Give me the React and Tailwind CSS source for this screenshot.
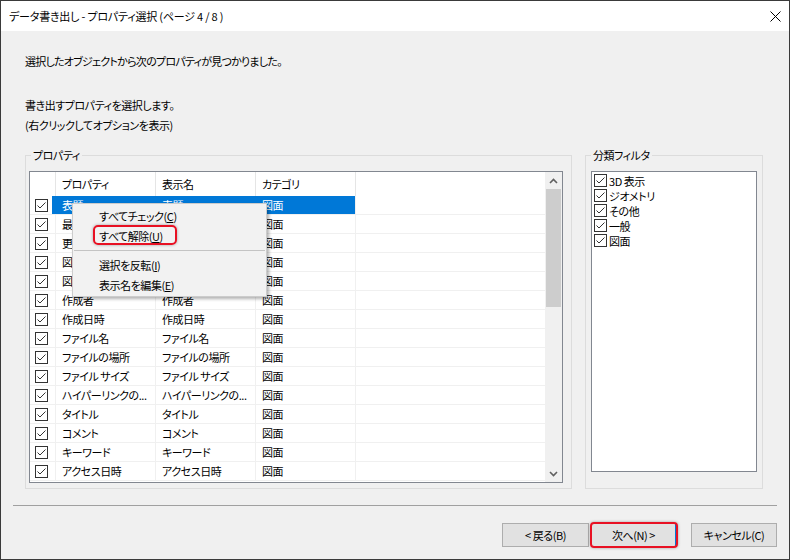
import React from 'react';

const ROWS = [
  ['表題', '表題'],
  ['最終保存者', '最終保存者'],
  ['更新日時', '更新日時'],
  ['図面番号', '図面番号'],
  ['図面名', '図面名'],
  ['作成者', '作成者'],
  ['作成日時', '作成日時'],
  ['ファイル名', 'ファイル名'],
  ['ファイルの場所', 'ファイルの場所'],
  ['ファイル サイズ', 'ファイル サイズ'],
  ['ハイパーリンクの...', 'ハイパーリンクの...'],
  ['タイトル', 'タイトル'],
  ['コメント', 'コメント'],
  ['キーワード', 'キーワード'],
  ['アクセス日時', 'アクセス日時'],
];

const FILTERS = ['3D 表示', 'ジオメトリ', 'その他', '一般', '図面'];

const CheckBox = () => (
  <svg width="13" height="13" viewBox="0 0 13 13" className="shrink-0">
    <rect x="0.5" y="0.5" width="12" height="12" fill="#fff" stroke="#333" />
    <path d="M2.5 6.5 L5 9 L10.5 3.5" fill="none" stroke="#333" strokeWidth="1" />
  </svg>
);

const Chevron = ({ down }) => (
  <svg width="9" height="6" viewBox="0 0 9 6">
    <path
      d={down ? 'M1 1 L4.5 4.5 L8 1' : 'M1 5 L4.5 1.5 L8 5'}
      fill="none"
      stroke="#606060"
      strokeWidth="1.6"
    />
  </svg>
);

const ContextMenu = () => (
  <div className="absolute left-[42px] top-[31px] w-[195px] border border-[#cccccc] bg-[#f2f2f2] pt-[2px] pb-[1px] shadow-[2px_2px_3px_rgba(0,0,0,0.3)] z-10">
    <div className="h-[20px] flex items-center pl-[26px]">
      すべてチェック(<u>C</u>)
    </div>
    <div className="h-[20px] flex items-center pl-[26px] relative">
      <div className="absolute left-[20px] top-[-1px] w-[84px] h-[20px] border-2 border-[#e81123] rounded-[5px] shadow-[0_0_3px_rgba(0,0,0,0.35)]" />
      すべて解除(<u>U</u>)
    </div>
    <div className="h-[9px] flex items-center px-[1px]">
      <div className="h-px w-full bg-[#c4c4c4]" />
    </div>
    <div className="h-[20px] flex items-center pl-[26px]">
      選択を反転(<u>I</u>)
    </div>
    <div className="h-[20px] flex items-center pl-[26px]">
      表示名を編集(<u>E</u>)
    </div>
  </div>
);

const PropertyList = () => (
  <div className="relative mt-[8px] w-[534px] h-[312px] border border-[#828790] bg-white flex">
    <div className="w-[515px] flex flex-col">
      <div className="h-[24px] flex shrink-0">
        <div className="w-[22px]" />
        <div className="w-[4px] border-r border-[#e5e5e5]" />
        <div className="w-[100px] border-r border-[#e5e5e5] pl-[6px] flex items-center">プロパティ</div>
        <div className="w-[100px] border-r border-[#e5e5e5] pl-[6px] flex items-center">表示名</div>
        <div className="w-[100px] border-r border-[#e5e5e5] pl-[6px] flex items-center">カテゴリ</div>
      </div>
      {ROWS.map(([name, label], i) => {
        const sel = i === 0;
        return (
          <div key={name} className="h-[19px] flex shrink-0 border-b border-[#f0f0f0]">
            <div className="w-[22px] flex items-center justify-end pr-[4px]">
              <CheckBox />
            </div>
            <div className={`flex ${sel ? 'bg-[#0078d7] text-white' : ''}`}>
              <div className={`w-[4px] border-r ${sel ? 'border-[#0078d7]' : 'border-[#f0f0f0]'}`} />
              <div className={`w-[100px] border-r ${sel ? 'border-[#0078d7]' : 'border-[#f0f0f0]'} pl-[6px] flex items-center whitespace-nowrap overflow-hidden`}>{name}</div>
              <div className={`w-[100px] border-r ${sel ? 'border-[#0078d7]' : 'border-[#f0f0f0]'} pl-[6px] flex items-center whitespace-nowrap overflow-hidden`}>{label}</div>
              <div className="w-[100px] border-r border-[#f0f0f0] pl-[6px] flex items-center">図面</div>
            </div>
          </div>
        );
      })}
    </div>
    <div className="w-[17px] bg-[#f0f0f0] flex flex-col">
      <div className="h-[17px] flex items-center justify-center">
        <Chevron />
      </div>
      <div className="mx-[1px] h-[118px] bg-[#cdcdcd]" />
      <div className="flex-1" />
      <div className="h-[17px] flex items-center justify-center">
        <Chevron down />
      </div>
    </div>
    <ContextMenu />
  </div>
);

export default function App() {
  return (
    <div className="w-[790px] h-[560px] border border-[#3a3a3a] bg-[#f0f0f0] flex flex-col text-[11px] leading-[16px] tracking-[-0.45px] text-black [font-family:'Noto_Sans_CJK_JP',sans-serif] [font-feature-settings:'palt']">
      <div className="h-[30px] bg-white flex items-center justify-between pl-[8px] pr-[8px] shrink-0">
        <span className="tracking-[-0.2px]">データ書き出し - プロパティ選択 (ページ 4 / 8 )</span>
        <svg width="11" height="11" viewBox="0 0 11 11">
          <path d="M0.5 0.5 L10.5 10.5 M10.5 0.5 L0.5 10.5" stroke="#000" strokeWidth="1" />
        </svg>
      </div>

      <div className="flex-1 flex flex-col">
        <div className="pl-[24px] pt-[20px]">
          <p className="leading-[20px] tracking-[-0.75px]">選択したオブジェクトから次のプロパティが見つかりました。</p>
          <p className="leading-[20px] mt-[24px]">書き出すプロパティを選択します。</p>
          <p className="leading-[20px]">(右クリックしてオプションを表示)</p>

          <div className="flex gap-[13px] mt-[12px]">
            <fieldset className="w-[547px] border border-[#dcdcdc] px-[3px] pb-[5px] m-0 min-w-0">
              <legend className="ml-[2px] px-[2px] leading-[16px]">プロパティ</legend>
              <PropertyList />
            </fieldset>

            <fieldset className="w-[178px] border border-[#dcdcdc] px-[5px] pb-[16px] m-0 min-w-0">
              <legend className="px-[2px] leading-[16px]">分類フィルタ</legend>
              <div className="mt-[8px] w-[166px] h-[301px] border border-[#828790] bg-white pt-[1px] pl-[2px]">
                {FILTERS.map((f) => (
                  <div key={f} className="h-[15px] flex items-center gap-[2px]">
                    <CheckBox />
                    <span>{f}</span>
                  </div>
                ))}
              </div>
            </fieldset>
          </div>
        </div>

        <div className="mx-[12px] mt-[16px] h-px bg-[#a0a0a0]" />

        <div className="mt-[17px] flex justify-end pr-[12px]">
          <button className="w-[87px] h-[24px] mr-[2px] border border-[#adadad] bg-[#e1e1e1] flex items-center justify-center">
            &lt; 戻る(B)
          </button>
          <div className="relative mr-[15px]">
            <button className="w-[85px] h-[24px] border border-[#0078d7] bg-[#e1e1e1] flex items-center justify-center">
              次へ(N) &gt;
            </button>
            <div className="absolute -left-[1px] -right-[2px] -top-[1px] -bottom-[1px] border-2 border-[#e81123] rounded-[4px] shadow-[0_0_3px_rgba(0,0,0,0.35)]" />
          </div>
          <button className="w-[86px] h-[24px] border border-[#adadad] bg-[#e1e1e1] flex items-center justify-center">
            キャンセル(C)
          </button>
        </div>
      </div>
    </div>
  );
}
